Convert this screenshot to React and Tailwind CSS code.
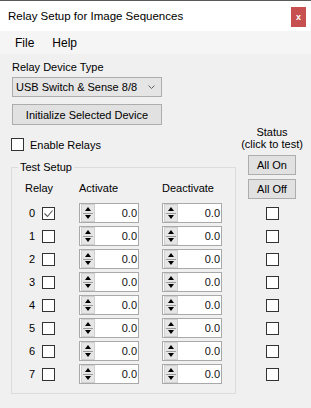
import React from "react";

function Check({ checked }) {
  return (
    <div className="w-[13px] h-[13px] border border-[#333333] bg-white flex items-center justify-center shrink-0">
      {checked && (
        <svg width="11" height="11" viewBox="0 0 11 11">
          <polyline points="1.5,5.5 4.5,8.5 9.5,2.5" fill="none" stroke="#555555" strokeWidth="1.1" />
        </svg>
      )}
    </div>
  );
}

function Spin() {
  return (
    <div className="w-[60px] h-[20px] border border-[#a9a9a9] bg-white flex items-center shrink-0">
      <div className="ml-[1px] w-[14px] h-[18px] bg-[#e6e6e6] border border-[#d0d0d0] flex flex-col">
        <div className="flex-1 flex items-center justify-center">
          <svg width="6" height="4" viewBox="0 0 6 4"><polygon points="3,0 6,4 0,4" fill="#000" /></svg>
        </div>
        <div className="h-[1px] bg-[#9a9a9a] mx-[1px]" />
        <div className="flex-1 flex items-center justify-center">
          <svg width="6" height="4" viewBox="0 0 6 4"><polygon points="0,0 6,0 3,4" fill="#000" /></svg>
        </div>
      </div>
      <div className="flex-1 text-right pr-[1px] leading-[12px] text-[11px] text-[#111]">0.0</div>
    </div>
  );
}

export default function App() {
  const rows = [0, 1, 2, 3, 4, 5, 6, 7];
  return (
    <div className="w-[311px] h-[408px] bg-[#f0f0f0] text-black text-[11px] font-['Liberation_Sans',Arial,sans-serif] overflow-hidden">
      <div className="h-[31px] bg-white border-t border-[#5a5a5a] flex items-center">
        <div className="pl-[8px] text-[11.5px] leading-[14px] whitespace-nowrap">Relay Setup for Image Sequences</div>
        <div className="ml-auto mr-[5px] self-start mt-[6px] w-[15px] h-[20px] bg-[#c75050] flex items-center justify-center text-white font-bold text-[9px] leading-[10px] pb-[1px]">
          x
        </div>
      </div>
      <div className="h-[23px] bg-[#f5f5f5] flex items-center pl-[15px] gap-[18px] text-[12px] leading-[14px]">
        <span>File</span>
        <span>Help</span>
      </div>
      <div className="pl-[11px] pt-[7px]">
        <div className="ml-[1px] leading-[12px]">Relay Device Type</div>
        <div className="ml-[1px] mt-[4px] w-[150px] h-[20px] bg-[#e5e5e5] border border-[#adadad] flex items-center pl-[3px] pr-[6px] justify-between">
          <span className="leading-[12px] text-[11px] whitespace-nowrap">USB Switch &amp; Sense 8/8</span>
          <svg width="7" height="4" viewBox="0 0 7 4"><polyline points="0.5,0.5 3.5,3.5 6.5,0.5" fill="none" stroke="#606060" strokeWidth="1" /></svg>
        </div>
        <div className="ml-[1px] mt-[7px] w-[150px] h-[21px] bg-[#e1e1e1] border border-[#adadad] flex items-center justify-center text-[11px] leading-[12px] whitespace-nowrap">
          Initialize Selected Device
        </div>
        <div className="flex">
          <div className="w-[225px] shrink-0">
            <div className="mt-[13px] h-[13px] flex items-center gap-[6px]">
              <Check checked={false} />
              <span className="leading-[12px]">Enable Relays</span>
            </div>
            <fieldset className="mt-[10px] w-[225px] border border-[#dcdcdc] pb-[9px]">
              <legend className="ml-[6px] px-[2px] leading-[12px]">Test Setup</legend>
              <div className="mt-[9px] flex leading-[12px]">
                <span className="w-[67px] pl-[13px]">Relay</span>
                <span className="w-[83px]">Activate</span>
                <span>Deactivate</span>
              </div>
              <div className="mt-[9px] flex flex-col gap-[3px]">
                {rows.map((r) => (
                  <div key={r} className="h-[20px] flex items-center">
                    <span className="w-[23px] text-right leading-[12px] text-[11px]">{r}</span>
                    <div className="ml-[7px]"><Check checked={r === 0} /></div>
                    <div className="ml-[24px]"><Spin /></div>
                    <div className="ml-[23px]"><Spin /></div>
                  </div>
                ))}
              </div>
            </fieldset>
          </div>
          <div className="w-[72px] shrink-0 flex flex-col items-center pt-[1px]">
            <div className="leading-[12px]">Status</div>
            <div className="leading-[12px] whitespace-nowrap">(click to test)</div>
            <div className="mt-[5px] w-[48px] h-[20px] bg-[#e1e1e1] border border-[#adadad] flex items-center justify-center leading-[12px]">All On</div>
            <div className="mt-[4px] w-[48px] h-[20px] bg-[#e1e1e1] border border-[#adadad] flex items-center justify-center leading-[12px]">All Off</div>
            <div className="mt-[4px] flex flex-col gap-[3px]">
              {rows.map((r) => (
                <div key={r} className="h-[20px] flex items-center">
                  <Check checked={false} />
                </div>
              ))}
            </div>
          </div>
        </div>
      </div>
    </div>
  );
}
